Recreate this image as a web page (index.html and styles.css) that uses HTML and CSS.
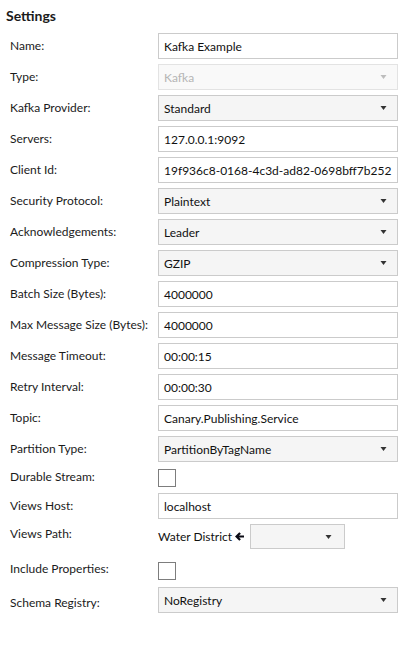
FILE: index.html
```html
<!DOCTYPE html>
<html>
<head>
<meta charset="utf-8">
<link rel="stylesheet" href="styles.css">
</head>
<body>
<div class="panel">
  <div class="title">Settings</div>
  <div class="form">
    <div class="lbl">Name:</div>
    <div class="box text">Kafka Example</div>

    <div class="lbl">Type:</div>
    <div class="box combo disabled"><span>Kafka</span><svg class="caret" width="7" height="4" viewBox="0 0 7 4"><polygon points="0.5,0 6.5,0 3.5,4"/></svg></div>

    <div class="lbl">Kafka Provider:</div>
    <div class="box combo"><span>Standard</span><svg class="caret" width="7" height="4" viewBox="0 0 7 4"><polygon points="0.5,0 6.5,0 3.5,4"/></svg></div>

    <div class="lbl">Servers:</div>
    <div class="box text">127.0.0.1:9092</div>

    <div class="lbl">Client Id:</div>
    <div class="box text">19f936c8-0168-4c3d-ad82-0698bff7b252</div>

    <div class="lbl">Security Protocol:</div>
    <div class="box combo"><span>Plaintext</span><svg class="caret" width="7" height="4" viewBox="0 0 7 4"><polygon points="0.5,0 6.5,0 3.5,4"/></svg></div>

    <div class="lbl">Acknowledgements:</div>
    <div class="box combo"><span>Leader</span><svg class="caret" width="7" height="4" viewBox="0 0 7 4"><polygon points="0.5,0 6.5,0 3.5,4"/></svg></div>

    <div class="lbl">Compression Type:</div>
    <div class="box combo"><span>GZIP</span><svg class="caret" width="7" height="4" viewBox="0 0 7 4"><polygon points="0.5,0 6.5,0 3.5,4"/></svg></div>

    <div class="lbl">Batch Size (Bytes):</div>
    <div class="box text">4000000</div>

    <div class="lbl">Max Message Size (Bytes):</div>
    <div class="box text">4000000</div>

    <div class="lbl">Message Timeout:</div>
    <div class="box text">00:00:15</div>

    <div class="lbl">Retry Interval:</div>
    <div class="box text">00:00:30</div>

    <div class="lbl">Topic:</div>
    <div class="box text">Canary.Publishing.Service</div>

    <div class="lbl">Partition Type:</div>
    <div class="box combo"><span>PartitionByTagName</span><svg class="caret" width="7" height="4" viewBox="0 0 7 4"><polygon points="0.5,0 6.5,0 3.5,4"/></svg></div>

    <div class="lbl lbl-top row-durable">Durable Stream:</div>
    <div class="check-cell row-durable"><div class="check"></div></div>

    <div class="lbl">Views Host:</div>
    <div class="box text">localhost</div>

    <div class="lbl lbl-top row-path">Views Path:</div>
    <div class="path row-path">
      <span class="path-text">Water District</span>
      <svg class="arrow" width="9" height="9" viewBox="0 0 9 9"><polygon points="0,4.5 4.3,0.2 5.9,1.7 4,3.5 9,3.5 9,5.5 4,5.5 5.9,7.3 4.3,8.8"/></svg>
      <div class="box combo small"><span></span><svg class="caret" width="7" height="4" viewBox="0 0 7 4"><polygon points="0.5,0 6.5,0 3.5,4"/></svg></div>
    </div>

    <div class="lbl lbl-top row-include">Include Properties:</div>
    <div class="check-cell row-include"><div class="check check-low"></div></div>

    <div class="lbl lbl-schema">Schema Registry:</div>
    <div class="box combo"><span>NoRegistry</span><svg class="caret" width="7" height="4" viewBox="0 0 7 4"><polygon points="0.5,0 6.5,0 3.5,4"/></svg></div>
  </div>
</div>
</body>
</html>
```
FILE: styles.css
```css
html, body {
  margin: 0;
  padding: 0;
  background: #ffffff;
}

body {
  font-family: "Lato", "Open Sans", sans-serif;
  font-size: 12px;
  color: #1b1b1b;
}

.panel {
  width: 408px;
  height: 646px;
}

.title {
  font-weight: 700;
  font-size: 14px;
  line-height: 20px;
  margin: 6px 0 7px 6px;
  color: #1b1b1b;
}

.form {
  display: grid;
  grid-template-columns: 148px 240px;
  row-gap: 5px;
  padding-left: 10px;
}

.lbl {
  height: 26px;
  line-height: 26px;
  white-space: nowrap;
}

.lbl-top {
  line-height: 20px;
}

.lbl-schema {
  line-height: 32px;
}

.box {
  box-sizing: border-box;
  height: 26px;
  border: 1px solid #cbcbcb;
  background: #ffffff;
  padding: 0 5px;
  display: flex;
  align-items: center;
  white-space: nowrap;
  overflow: hidden;
  color: #111111;
}

.combo {
  background: #f5f5f5;
  justify-content: space-between;
  padding-right: 10px;
}

.combo .caret {
  fill: #333333;
  flex: none;
}

.disabled {
  background: #f9f9f9;
  border-color: #e3e3e3;
  color: #b5b5b5;
}

.disabled .caret {
  fill: #bdbdbd;
}

.row-durable {
  height: 21px;
}

.row-path {
  height: 30px;
}

.row-include {
  height: 23px;
}

.check-cell {
  display: flex;
  align-items: flex-start;
}

.check {
  box-sizing: border-box;
  width: 18px;
  height: 18px;
  margin-top: 2px;
  border: 1px solid #7d7d7d;
  background: #ffffff;
}

.check-low {
  margin-top: 3px;
}

.path {
  display: flex;
  align-items: flex-start;
}

.path-text {
  line-height: 26px;
  color: #111111;
}

.arrow {
  margin: 8px 0 0 3px;
  fill: #0a0a14;
  flex: none;
}

.small {
  width: 95px;
  height: 25px;
  margin-left: 6px;
  padding-right: 12px;
}
```
